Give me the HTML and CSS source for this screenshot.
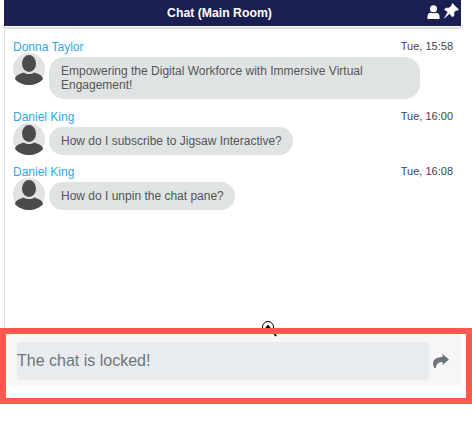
FILE: index.html
```html
<!DOCTYPE html>
<html lang="en">
<head>
  <meta charset="UTF-8">
  <title>Chat (Main Room)</title>
  <link rel="stylesheet" href="styles.css">
</head>
<body>

  <div class="chat">
    <div class="chat-header">
      <span class="chat-title">Chat (Main Room)</span>
      <div class="header-icons">
        <svg width="13" height="14" viewBox="0 0 14 15"><circle cx="7" cy="4" r="3.8" fill="#fff"/><path d="M0.5 15V11.8C0.5 9.6 2.2 8.2 4 8.2C5.8 9.2 8.2 9.2 10 8.2C11.8 8.2 13.5 9.6 13.5 11.8V15Z" fill="#fff"/></svg>
        <svg width="16" height="16" viewBox="0 0 16 16"><path d="M9.500 0.500L15.500 6.500L14 7.500L12.800 7L10.800 10L11 12.500L9.500 14L6.500 10.500L1.500 15L5 9L1.500 6.500L3 5L5.500 5.200L8.800 3L8.500 2Z" fill="#fff" stroke="#fff" stroke-width="0.6" stroke-linejoin="round"/></svg>
      </div>
    </div>

    <div class="messages">
      <div class="msg">
        <div class="msg-head"><span class="msg-name">Donna Taylor</span><span class="msg-time">Tue, 15:58</span></div>
        <div class="msg-body">
          <svg class="avatar" viewBox="0 0 32 32"><circle cx="16" cy="16" r="16" fill="#e2e2e2"/><ellipse cx="16" cy="10.5" rx="7" ry="8.5" fill="#4b4b4b"/><path d="M2 26C2.5 22.5 6 21 11 19.5C13 21.5 19 21.5 21 19.5C26 21 29.5 22.5 30 26C26.500 30 21 32 16 32C11 32 5.500 30 2 26Z" fill="#4b4b4b"/></svg>
          <div class="bubble">Empowering the Digital Workforce with Immersive Virtual Engagement!</div>
        </div>
      </div>
      <div class="msg">
        <div class="msg-head"><span class="msg-name">Daniel King</span><span class="msg-time">Tue, 16:00</span></div>
        <div class="msg-body">
          <svg class="avatar" viewBox="0 0 32 32"><circle cx="16" cy="16" r="16" fill="#e2e2e2"/><ellipse cx="16" cy="10.5" rx="7" ry="8.5" fill="#4b4b4b"/><path d="M2 26C2.5 22.5 6 21 11 19.5C13 21.5 19 21.5 21 19.5C26 21 29.5 22.5 30 26C26.500 30 21 32 16 32C11 32 5.500 30 2 26Z" fill="#4b4b4b"/></svg>
          <div class="bubble">How do I subscribe to Jigsaw Interactive?</div>
        </div>
      </div>
      <div class="msg">
        <div class="msg-head"><span class="msg-name">Daniel King</span><span class="msg-time">Tue, 16:08</span></div>
        <div class="msg-body">
          <svg class="avatar" viewBox="0 0 32 32"><circle cx="16" cy="16" r="16" fill="#e2e2e2"/><ellipse cx="16" cy="10.5" rx="7" ry="8.5" fill="#4b4b4b"/><path d="M2 26C2.5 22.5 6 21 11 19.5C13 21.5 19 21.5 21 19.5C26 21 29.5 22.5 30 26C26.500 30 21 32 16 32C11 32 5.500 30 2 26Z" fill="#4b4b4b"/></svg>
          <div class="bubble">How do I unpin the chat pane?</div>
        </div>
      </div>
    </div>

    <div class="chat-input">
      <div class="locked">The chat is locked!</div>
      <svg class="send" width="16" height="14" viewBox="0 0 16 14"><path d="M9.500 0L16 5.500L9.500 11V8C6 8 3.500 9 3 14H1.500C0.500 12.500 0 11 0 9.500C0 5 4.500 3 9.500 3Z" fill="#6c757d"/></svg>
    </div>
  </div>

  <svg class="cursor" width="16" height="20" viewBox="0 0 16 20"><circle cx="6" cy="6" r="5.500" fill="#fff" stroke="#000"/><path d="M2.500 8L6 3.500L9.500 8Z" fill="#000"/><path d="M11 11L15 14.500L13 15.500Z" fill="#000"/></svg>
  <div class="highlight"></div>

</body>
</html>
```

FILE: styles.css
```css
body {
  margin: 0;
  padding: 0;
  background: #fff;
  font-family: "Liberation Sans", Arial, sans-serif;
  overflow: hidden;
}

.chat {
  display: flex;
  flex-direction: column;
  width: 457px;
  height: 385px;
  margin-left: 4px;
}

.chat-header {
  display: flex;
  align-items: center;
  justify-content: center;
  position: relative;
  flex: none;
  height: 26px;
  padding-right: 26px;
  background: #1a1f52;
  color: #fff;
  font-size: 12.25px;
  font-weight: bold;
}

.header-icons {
  position: absolute;
  top: 3px;
  right: 2px;
  display: flex;
  align-items: flex-end;
  gap: 3px;
}

.messages {
  flex: 1;
  margin-top: 1px;
  padding: 11px 8px 0 8px;
  border-top: 2px solid #ddd;
  border-left: 1px solid #ddd;
}

.msg {
  margin-bottom: 10.5px;
}

.msg-head {
  display: flex;
  justify-content: space-between;
  align-items: center;
  height: 14px;
  font-size: 12px;
}

.msg-name {
  color: #2fa8e8;
}

.msg-time {
  margin-bottom: 2px;
  color: #444;
  font-size: 11px;
}

.msg-body {
  display: flex;
  align-items: flex-start;
  gap: 4px;
  margin-top: -1px;
}

.avatar {
  flex: none;
  width: 32px;
  height: 32px;
}

.bubble {
  max-width: 348px;
  margin-top: 4px;
  padding: 7px 11px 7px 12px;
  background: #e0e3e4;
  border-radius: 15px;
  color: #555;
  font-size: 12px;
  line-height: 14px;
}

.chat-input {
  display: flex;
  align-items: center;
  flex: none;
  height: 51px;
  padding: 3px 12px 0 13px;
  box-sizing: border-box;
  background: #f6f6f6;
}

.locked {
  flex: 1;
  height: 38px;
  line-height: 38px;
  background: #e9ecef;
  border-radius: 3px;
  color: #6c757d;
  font-size: 16px;
}

.send {
  flex: none;
  margin-left: 4px;
}

/* annotation drawn on top of the screenshot */
.highlight {
  position: absolute;
  top: 328px;
  left: 0;
  width: 472px;
  height: 76px;
  box-sizing: border-box;
  border: 6px solid #ff5a4d;
}

.cursor {
  position: absolute;
  top: 321px;
  left: 262px;
}
```
